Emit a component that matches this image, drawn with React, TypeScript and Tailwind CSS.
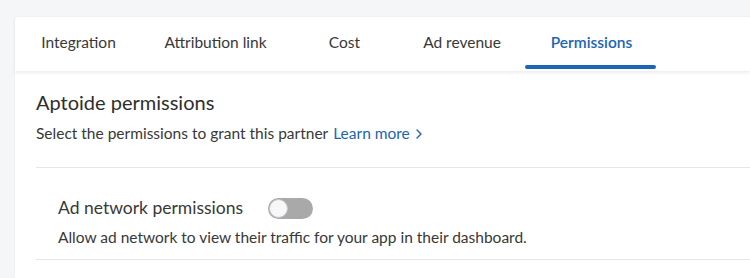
import { useState } from 'react'

const tabs = [
  { label: 'Integration', w: 'w-[127px]' },
  { label: 'Attribution link', w: 'w-[147px]' },
  { label: 'Cost', w: 'w-[111px]' },
  { label: 'Ad revenue', w: 'w-[124px]' },
  { label: 'Permissions', w: 'w-[135px]' },
]

export default function App() {
  const [active, setActive] = useState('Permissions')
  const [enabled, setEnabled] = useState(false)

  return (
    <div className="min-h-[278px] bg-[#f5f6f8] pt-[17px] pl-[15px] font-['Lato',sans-serif] text-[#383838]">
      <div className="bg-white min-h-[261px] rounded-tl-[3px] shadow-[0_0_2px_rgba(0,0,0,0.08)]">
        {/* Tabs */}
        <div className="flex h-[54px] shadow-[0_2px_3px_rgba(0,0,0,0.07)] relative">
          {tabs.map((t) => (
            <button
              key={t.label}
              onClick={() => setActive(t.label)}
              className={`${t.w} relative flex items-center justify-center pb-[3px] text-[15.5px] ${
                active === t.label ? 'text-[#1a65b5] font-semibold' : 'text-[#383838]'
              }`}
            >
              {t.label}
              {active === t.label && (
                <span className="absolute left-[1px] right-[3px] bottom-[2px] h-[4px] rounded-full bg-[#1a65b5]" />
              )}
            </button>
          ))}
        </div>

        {/* Content */}
        <div className="pl-[21px] pt-[18px]">
          <h2 className="text-[20px] leading-[26px] text-[#2e2e2e]">Aptoide permissions</h2>
          <p className="mt-[8px] text-[15.5px] leading-[20px] flex items-center">
            Select the permissions to grant this partner
            <a href="#" className="ml-[5px] text-[#1a65b5] inline-flex items-center">
              Learn more
              <svg width="6" height="10" viewBox="0 0 6 10" className="ml-[6px] mt-[1px]">
                <path d="M1 1l4 4-4 4" fill="none" stroke="#1a65b5" strokeWidth="1.4" strokeLinecap="round" strokeLinejoin="round" />
              </svg>
            </a>
          </p>
          <div className="mt-[24px] border-t border-[#e6e6e6]" />

          <div className="pl-[22px] pt-[29px] pb-[12px]">
            <div className="flex items-center gap-[25px]">
              <span className="text-[17.5px] leading-[22px]">Ad network permissions</span>
              <button
                onClick={() => setEnabled(!enabled)}
                className={`relative w-[45px] h-[21px] rounded-full ${enabled ? 'bg-[#1a65b5]' : 'bg-[#a9a9a9]'}`}
              >
                <span
                  className={`absolute top-[1px] h-[19px] w-[19px] rounded-full bg-[#f7f7f9] border border-[#c4c4c4] ${
                    enabled ? 'right-[1px]' : 'left-[1px]'
                  }`}
                />
              </button>
            </div>
            <p className="mt-[8px] text-[15.5px] leading-[20px]">
              Allow ad network to view their traffic for your app in their dashboard.
            </p>
          </div>
          <div className="border-t border-[#e6e6e6]" />
        </div>
      </div>
    </div>
  )
}
